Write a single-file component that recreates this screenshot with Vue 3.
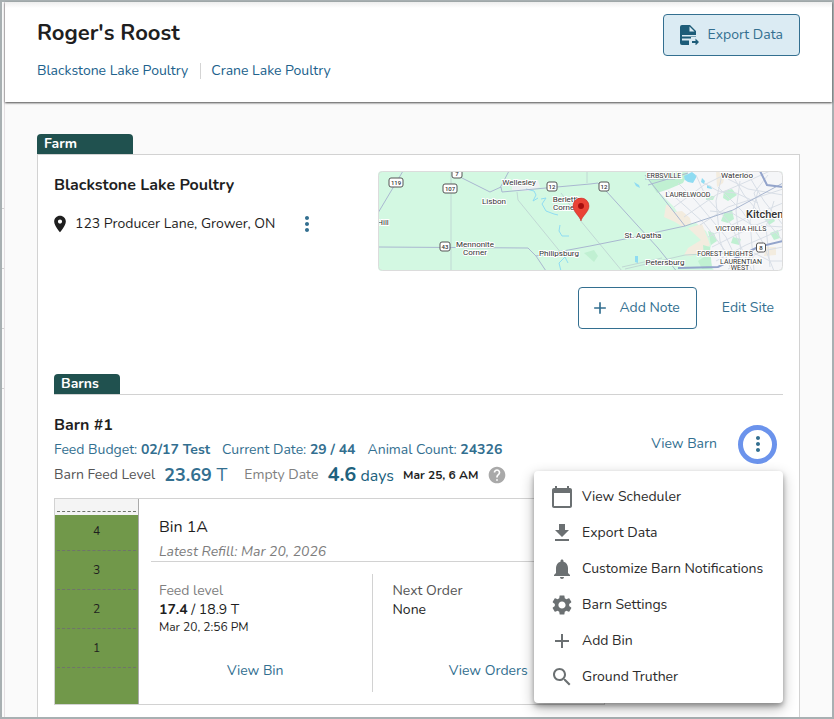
<script setup>
import { ref } from 'vue'

const icons = {
  calendar: 'M20 3h-1V1h-2v2H7V1H5v2H4c-1.1 0-2 .9-2 2v16c0 1.1.9 2 2 2h16c1.1 0 2-.9 2-2V5c0-1.1-.9-2-2-2zm0 18H4V8h16v13z',
  download: 'M19 9h-4V3H9v6H5l7 7 7-7zM5 18v2h14v-2H5z',
  bell: 'M12 22c1.1 0 2-.9 2-2h-4c0 1.1.89 2 2 2zm6-6v-5c0-3.07-1.64-5.64-4.5-6.32V4c0-.83-.67-1.5-1.5-1.5s-1.5.67-1.5 1.5v.68C7.63 5.36 6 7.92 6 11v5l-2 2v1h16v-1l-2-2z',
  settings: 'M19.14 12.94c.04-.3.06-.61.06-.94 0-.32-.02-.64-.07-.94l2.03-1.58c.18-.14.23-.41.12-.61l-1.92-3.32c-.12-.22-.37-.29-.59-.22l-2.39.96c-.5-.38-1.03-.7-1.62-.94l-.36-2.54c-.04-.24-.24-.41-.48-.41h-3.84c-.24 0-.43.17-.47.41l-.36 2.54c-.59.24-1.13.57-1.62.94l-2.39-.96c-.22-.08-.47 0-.59.22L2.74 8.87c-.12.21-.08.47.12.61l2.03 1.58c-.05.3-.09.63-.09.94s.02.64.07.94l-2.03 1.58c-.18.14-.23.41-.12.61l1.92 3.32c.12.22.37.29.59.22l2.39-.96c.5.38 1.03.7 1.62.94l.36 2.54c.05.24.24.41.48.41h3.84c.24 0 .44-.17.47-.41l.36-2.54c.59-.24 1.13-.56 1.62-.94l2.39.96c.22.08.47 0 .59-.22l1.92-3.32c.12-.22.07-.47-.12-.61l-2.01-1.58zM12 15.6c-1.98 0-3.6-1.62-3.6-3.6s1.62-3.6 3.6-3.6 3.6 1.62 3.6 3.6-1.62 3.6-3.6 3.6z',
  plus: 'M19 13h-6v6h-2v-6H5v-2h6V5h2v6h6v2z',
  search: 'M15.5 14h-.79l-.28-.27C15.41 12.59 16 11.11 16 9.5 16 5.91 13.09 3 9.5 3S3 5.91 3 9.5 5.91 16 9.5 16c1.61 0 3.09-.59 4.23-1.57l.27.28v.79l5 4.99L20.49 19l-4.99-5zm-6 0C7.01 14 5 11.99 5 9.5S7.01 5 9.5 5 14 7.01 14 9.5 11.99 14 9.5 14z',
  more: 'M12 8c1.1 0 2-.9 2-2s-.9-2-2-2-2 .9-2 2 .9 2 2 2zm0 2c-1.1 0-2 .9-2 2s.9 2 2 2 2-.9 2-2-.9-2-2-2zm0 6c-1.1 0-2 .9-2 2s.9 2 2 2 2-.9 2-2-.9-2-2-2z',
  place: 'M12 2C8.13 2 5 5.13 5 9c0 5.25 7 13 7 13s7-7.75 7-13c0-3.87-3.13-7-7-7zm0 9.5c-1.38 0-2.5-1.12-2.5-2.5s1.12-2.5 2.5-2.5 2.5 1.12 2.5 2.5-1.12 2.5-2.5 2.5z',
  help: 'M12 2C6.48 2 2 6.48 2 12s4.48 10 10 10 10-4.48 10-10S17.52 2 12 2zm1 17h-2v-2h2v2zm2.07-7.75l-.9.92C13.45 12.9 13 13.5 13 15h-2v-.5c0-1.1.45-2.1 1.17-2.83l1.24-1.26c.37-.36.59-.86.59-1.41 0-1.1-.9-2-2-2s-2 .9-2 2H8c0-2.21 1.79-4 4-4s4 1.79 4 4c0 .88-.36 1.68-.93 2.25z'
}

const menuOpen = ref(true)
const menuItems = [
  { label: 'View Scheduler', icon: icons.calendar },
  { label: 'Export Data', icon: icons.download },
  { label: 'Customize Barn Notifications', icon: icons.bell },
  { label: 'Barn Settings', icon: icons.settings },
  { label: 'Add Bin', icon: icons.plus },
  { label: 'Ground Truther', icon: icons.search }
]

const bin = { level: 17.4, capacity: 18.9, rings: [4, 3, 2, 1] }
const fillPercent = Math.round((bin.level / bin.capacity) * 1000) / 10 + '%'

const shields = [
  { x: 18, y: 12, w: 14, n: '119' },
  { x: 79, y: 3, w: 10, n: '7' },
  { x: 72, y: 18, w: 14, n: '107' },
  { x: 67, y: 76, w: 10, n: '43' },
  { x: 174, y: 16, w: 10, n: '12' },
  { x: 226, y: 16, w: 10, n: '12' },
  { x: 383, y: 77, w: 9, n: '8' }
]
const places = [
  { x: 141, y: 14, t: 'Wellesley' },
  { x: 116, y: 33, t: 'Lisbon' },
  { x: 189, y: 31, t: 'Berlett\'s' },
  { x: 189, y: 39, t: 'Corners' },
  { x: 5, y: 54, t: 'Hill' },
  { x: 97, y: 76, t: 'Mennonite' },
  { x: 97, y: 84, t: 'Corner' },
  { x: 181, y: 85, t: 'Philipsburg' },
  { x: 265, y: 67, t: 'St. Agatha' },
  { x: 287, y: 94, t: 'Petersburg' },
  { x: 359, y: 7, t: 'Waterloo' }
]
const districts = [
  { x: 286, y: 7, t: 'ERBSVILLE' },
  { x: 310, y: 26, t: 'LAURELWOOD' },
  { x: 363, y: 60, t: 'VICTORIA HILLS' },
  { x: 347, y: 85, t: 'FOREST HEIGHTS' },
  { x: 363, y: 93, t: 'LAURENTIAN' },
  { x: 362, y: 99, t: 'WEST' }
]
</script>

<template>
  <div class="frame">
    <div class="rail"><span></span><span></span><span></span><span></span></div>
    <div class="page">
      <header class="top">
        <div>
          <h1>Roger's Roost</h1>
          <nav class="sites">
            <a href="#blackstone">Blackstone Lake Poultry</a>
            <a href="#crane">Crane Lake Poultry</a>
          </nav>
        </div>
        <button class="btn export" type="button">
          <svg width="20" height="20" viewBox="0 0 20 20" aria-hidden="true">
            <path d="M2 0h8l6 6v4H2v1.500h14v.5h-5v1.500H2v2h7V20H2a2 2 0 0 1-2-2V2a2 2 0 0 1 2-2z M12 16h3.500v-2.500L19 17l-3.500 3.500V18H12z" fill="#1d5c78" />
            <path d="M9.500 1.500V6.500h5z" fill="#dbebf3" />
          </svg>
          Export Data
        </button>
      </header>

      <main class="body">
        <h2 class="tab farm-tab">Farm</h2>
        <section class="card">
          <div class="farm">
            <div>
              <h3 class="name">Blackstone Lake Poultry</h3>
              <div class="address">
                <svg class="pin" viewBox="0 0 24 24" aria-hidden="true"><path :d="icons.place" /></svg>
                <span>123 Producer Lane, Grower, ON</span>
                <button class="kebab" type="button" aria-label="Site options">
                  <svg class="icon" viewBox="0 0 24 24" aria-hidden="true"><path :d="icons.more" /></svg>
                </button>
              </div>
            </div>
            <svg class="map" viewBox="0 0 405 100" preserveAspectRatio="xMidYMid slice" role="img" aria-label="Farm location">
              <rect width="405" height="100" fill="#d3f8e2" />
              <path d="M310 0H405V100H336L330 84 334 72 328 60 318 52 306 52 296 36 280 20 290 16 300 14z" fill="#f5f6f8" />
              <path d="M134 13l6-5 10 2 10-1 2 7-12 4-16-1z" fill="#edf0f2" />
              <path d="M288 34l3 0 5 7 8-1 8 7 1 5-8 4-8-5-11-5z M310 57l14-4 6 15 2 6-10 8-9 3-7-1 4-7 13-8z M338 0h10l-3 12-6 4z M388 76h10v8l-12 1z" fill="#f3ecdf" />
              <path d="M343 50l3-8 8-3 2 9-6 4z M346 20l8-2 5 6-9 6-5-3z M328 22l4 0 0 3 5 0-2 4-7 0z M385 45l8-3 4 8-6 4z M392 62l8-3 2 8-6 2z M330 60l6 2 3 8-6 4z M325 74l7 2 2 22h-10l-4-8 6-4z M206 82l10-3 4 6-4 6z M270 8l20-6 20 0-5 10-14 6-12 4z M355 66l8 2-2 6-8-2z" fill="#c0f0d2" />
              <path d="M306 5l8-4 5 4-4 7-5-1-3-2z M329 14l4 1 1 3-5-1z M256 11l5 3 1 3-4-2z M257 85l3 0 0 7-3-1z M324 7l3 3-1 3-3-2z" fill="#8fdcf2" />
              <g fill="none" stroke="#8fdcf2" stroke-width="1">
                <path d="M148 18l8 2 2 4-3 6 5-3M163 28l5-1-4 6 4 7 8 3 4 1M182 54l-1 6 3 5 7 0M183 100l-2-8 6-6 3 6" />
              </g>
              <g fill="none" stroke="#d8dee6" stroke-width="1">
                <path d="M290 20l16 14 20 18 26 34M300 12l18 18 30 36 16 34M318 4l10 22 24 26 22 48M340 16l24 24 20 30 12 30M352 0l14 24 24 28 15 18M368 0l18 30 19 24M296 36l30-22 20-10M306 46l32-22 32-14 22-10M322 54l28-18 55-18M330 66l36-18 39-16M334 76l44-22 27-10M338 90l30-16 37-16M350 98l34-18 21-4M344 4l-6 26 4 40 10 26M362 10l-4 30 6 50M380 20l-8 30 4 50M396 30l-8 26 4 40M332 40l22 2 20 12 31 2M350 8l20 10 35 6M326 12l14 8 18 2 22 10M356 88l20-6 16 8 13 0M390 4l-14 18 6 18 14 8" />
              </g>
              <g fill="none" stroke="#c0d8d4" stroke-width="1">
                <path d="M73 0V100M139 21l1 8 44 54M202 49l42 51M209 0v12M247 98l60-14 40-2M244 96l40-9M183 22l20 27" />
              </g>
              <g fill="none" stroke="#a9b7d0" stroke-width="1">
                <path d="M25 0L0 42M78 4l34 17 11-5 1 5 88-8 8-1 9 9 51 56 20 25M131 0l-9 17M0 76l150 1 8 8 10 15M158 85l54-10 35-7 60-13 48-16 50-27M267 4l40 51M267 8l30 0M270 14l40-12" />
              </g>
              <g fill="none" stroke="#93a4cb" stroke-width="2">
                <path d="M300 97l40-1 24-12 16-8 25-6M382 0l7 14 16 2" />
              </g>
              <g class="shields">
                <g v-for="(s, i) in shields" :key="i">
                  <rect :x="s.x - s.w / 2" :y="s.y - 5" :width="s.w" height="9" rx="2" fill="#fff" stroke="#555" />
                  <text :x="s.x" :y="s.y + 2">{{ s.n }}</text>
                </g>
              </g>
              <g class="places">
                <text v-for="p in places" :key="p.t" :x="p.x" :y="p.y">{{ p.t }}</text>
              </g>
              <g class="districts">
                <text v-for="d in districts" :key="d.t" :x="d.x" :y="d.y">{{ d.t }}</text>
              </g>
              <text class="city" x="368" y="47">Kitchener</text>
              <path d="M203 50c-1-5-8-9-8-15a8 8 0 0 1 16 0c0 6-7 10-8 15z" fill="#ea4335" stroke="#c5221f" stroke-width="0.500" />
              <circle cx="203" cy="35" r="3" fill="#a50e0e" />
              <rect x="0.500" y="0.500" width="404" height="99" rx="4" fill="none" stroke="#dcdcdc" />
            </svg>
          </div>

          <div class="actions">
            <button class="btn outline" type="button">
              <svg class="plus" viewBox="0 0 24 24" aria-hidden="true"><path :d="icons.plus" /></svg>
              Add Note
            </button>
            <a class="link edit" href="#edit">Edit Site</a>
          </div>

          <h2 class="tab barns-tab">Barns</h2>
          <div class="barn">
            <div class="barn-head">
              <div>
                <h3 class="barn-name">Barn #1</h3>
                <div class="budget">
                  <span>Feed Budget: <b>02/17 Test</b></span>
                  <span>Current Date: <b>29 / 44</b></span>
                  <span>Animal Count: <b>24326</b></span>
                </div>
              </div>
              <div class="barn-actions">
                <a class="link" href="#barn">View Barn</a>
                <button
                  class="kebab ring"
                  type="button"
                  aria-label="Barn options"
                  :aria-expanded="menuOpen"
                  @click="menuOpen = !menuOpen"
                >
                  <svg class="icon" viewBox="0 0 24 24" aria-hidden="true"><path :d="icons.more" /></svg>
                </button>
              </div>
            </div>
            <div class="levels">
              <span class="dark">Barn Feed Level</span>
              <span class="amount"><b>23.69</b> T</span>
              <span class="muted empty">Empty Date</span>
              <span class="days"><b>4.6</b> days</span>
              <b class="stamp">Mar 25, 6 AM</b>
              <svg class="help" viewBox="0 0 24 24" role="img" aria-label="Help"><path :d="icons.help" /></svg>
            </div>

            <article class="bin">
              <div class="gauge">
                <div class="fill" :style="{ height: fillPercent }"></div>
                <div class="rings">
                  <span v-for="n in bin.rings" :key="n">{{ n }}</span>
                  <span></span>
                </div>
              </div>
              <div class="bin-main">
                <div class="bin-head">
                  <h4>Bin 1A</h4>
                  <em>Latest Refill: Mar 20, 2026</em>
                </div>
                <div class="cols">
                  <div class="col">
                    <span class="muted">Feed level</span>
                    <span class="value"><b>{{ bin.level }}</b> / {{ bin.capacity }} T</span>
                    <span class="small">Mar 20, 2:56 PM</span>
                    <a class="link" href="#bin">View Bin</a>
                  </div>
                  <div class="col">
                    <span class="dark">Next Order</span>
                    <span class="value">None</span>
                    <a class="link" href="#orders">View Orders</a>
                  </div>
                </div>
              </div>
            </article>

            <div v-if="menuOpen" class="menu" role="menu">
              <button v-for="m in menuItems" :key="m.label" type="button" role="menuitem">
                <svg class="icon" viewBox="0 0 24 24" aria-hidden="true"><path :d="m.icon" /></svg>
                {{ m.label }}
              </button>
            </div>
          </div>
        </section>
      </main>
    </div>
  </div>
</template>

<style>
body {
  margin: 0;
}
</style>

<style scoped>
* {
  box-sizing: border-box;
}
.frame {
  display: flex;
  min-height: 100vh;
  border: 2px solid #a8b0b2;
  background: #fafafa;
  color: #1f1f1f;
  font: 14px/20px Nunito, Lato, 'Open Sans', sans-serif;
}
h1, h2, h3, h4 {
  margin: 0;
}
a {
  color: #20618c;
  text-decoration: none;
}
button {
  margin: 0;
  padding: 0;
  border: 0;
  background: none;
  font: inherit;
  color: #336f90;
  cursor: pointer;
}
svg {
  display: block;
  flex: none;
  fill: currentColor;
}
.icon {
  width: 24px;
  height: 24px;
}
.rail {
  display: flex;
  flex-direction: column;
  gap: 59px;
  width: 3px;
  padding-top: 206px;
  border-right: 1px solid #e4dfe2;
}
.rail span {
  height: 1px;
  background: #d0d0d0;
}
.page {
  display: flex;
  flex: 1;
  flex-direction: column;
  min-width: 0;
}
.top {
  display: flex;
  justify-content: space-between;
  align-items: flex-start;
  min-height: 100px;
  padding: 12px 32px 0;
  background: linear-gradient(#eeeeee, #ffffff 6px);
  box-shadow: 0 1px 2px rgba(0, 0, 0, 0.7);
}
h1 {
  padding-top: 5px;
  font-size: 22px;
  line-height: 28px;
  font-weight: 700;
}
.sites {
  display: flex;
  margin-top: 16px;
  line-height: 16px;
}
.sites a + a {
  margin-left: 12px;
  padding-left: 10px;
  border-left: 1px solid #d4d4d4;
}
.btn {
  display: flex;
  align-items: center;
  height: 42px;
  border: 1px solid #336f90;
  border-radius: 4px;
}
.export {
  gap: 8px;
  padding: 0 16px;
  background: #dbebf3;
}
.body {
  display: flex;
  flex: 1;
  flex-direction: column;
  padding: 32px 32px 0;
}
.tab {
  height: 20px;
  padding-left: 7px;
  border-radius: 4px 4px 0 0;
  background: #20514f;
  color: #ffffff;
  font-size: 14px;
  line-height: 20px;
}
.farm-tab {
  width: 96px;
}
.barns-tab {
  width: 66px;
  margin-top: 45px;
}
.card {
  flex: 1;
  padding: 16px 16px 12px;
  border: 1px solid #d2d2d2;
  border-bottom: 0;
  background: #ffffff;
}
.farm {
  display: grid;
  grid-template-columns: 4fr 5fr;
}
.name {
  padding-top: 4px;
  font-size: 16px;
}
.address {
  display: flex;
  align-items: center;
  margin-top: 17px;
}
.pin {
  width: 20px;
  height: 20px;
  margin: 0 5px 0 -4px;
}
.kebab {
  color: #336f90;
}
.address .kebab {
  margin-left: 20px;
}
.map {
  width: 100%;
  height: 100px;
  border-radius: 4px;
}
.map text {
  fill: #333333;
  stroke: #ffffff;
  stroke-width: 2px;
  paint-order: stroke;
  text-anchor: middle;
  font-family: Roboto, sans-serif;
  font-size: 8px;
}
.map .shields text {
  stroke-width: 0;
  font-size: 6px;
  font-weight: 500;
}
.map .districts text {
  font-size: 7px;
}
.map .city {
  font-size: 11px;
  font-weight: 500;
  text-anchor: start;
}
.actions {
  display: flex;
  align-items: center;
  justify-content: flex-end;
  gap: 25px;
  margin-top: 16px;
}
.outline {
  gap: 9px;
  padding: 0 16px 0 11px;
}
.plus {
  width: 20px;
  height: 20px;
}
.link {
  color: #336f90;
}
.edit {
  margin-right: 9px;
}
.barn {
  position: relative;
  border-top: 1px solid #d2d2d2;
}
.barn-head {
  display: flex;
  justify-content: space-between;
  padding-top: 20px;
}
.barn-name {
  font-size: 16px;
}
.budget {
  display: flex;
  gap: 12px;
  margin-top: 5px;
  color: #336f90;
}
.barn-actions {
  display: flex;
  align-items: center;
  gap: 21px;
  height: 40px;
  margin: 9px 6px 0 0;
}
.ring {
  display: grid;
  place-items: center;
  width: 39px;
  height: 39px;
  border: 5px solid #6b93ec;
  border-radius: 50%;
}
.levels {
  display: flex;
  align-items: center;
  height: 22px;
  margin-bottom: 12px;
  gap: 9px;
}
.dark {
  color: #555555;
}
.muted {
  color: #808080;
}
.amount {
  color: #336f90;
  font-size: 18px;
}
.empty {
  margin-left: 8px;
}
.days {
  color: #20617d;
  font-size: 16px;
}
.days b {
  font-size: 20px;
}
.stamp {
  font-size: 12px;
}
.help {
  width: 20px;
  height: 20px;
  color: #a9a9a9;
}
.bin {
  display: flex;
  max-width: 551px;
  height: 207px;
  border: 1px solid #d2d2d2;
}
.gauge {
  position: relative;
  width: 84px;
  flex: none;
  border-right: 1px solid #aaaaaa;
  background: #f4f4f4;
}
.fill {
  position: absolute;
  right: 0;
  bottom: 0;
  left: 0;
  background: #71984a;
}
.rings {
  position: relative;
  display: flex;
  flex-direction: column;
  padding: 12px 2px 0;
  font-size: 12px;
  line-height: 38px;
  text-align: center;
}
.rings span {
  height: 39px;
  border-top: 1px dashed #6f746c;
}
.bin-main {
  display: flex;
  flex: 1;
  flex-direction: column;
}
.bin-head {
  margin: 0 12px;
  padding: 18px 8px 0;
  height: 63px;
  border-bottom: 1px solid #d2d2d2;
}
h4 {
  font-size: 16px;
  font-weight: 400;
}
em {
  display: block;
  margin-top: 5px;
  color: #7d7d7d;
}
.cols {
  display: grid;
  flex: 1;
  grid-template-columns: 1fr 1fr;
  padding: 12px 0;
}
.col {
  display: flex;
  flex-direction: column;
  padding: 7px 20px 11px;
}
.col + .col {
  border-left: 1px solid #d2d2d2;
}
.value {
  line-height: 18px;
}
.small {
  font-size: 12px;
  line-height: 16px;
}
.col .link {
  margin-top: auto;
  text-align: center;
}
.menu {
  position: absolute;
  top: 76px;
  right: 0;
  display: flex;
  flex-direction: column;
  min-width: 249px;
  padding: 8px 0;
  border-radius: 4px;
  background: #ffffff;
  box-shadow: 0 3px 5px rgba(0, 0, 0, 0.3), 0 5px 14px rgba(0, 0, 0, 0.3);
}
.menu button {
  display: flex;
  align-items: center;
  gap: 8px;
  height: 36px;
  padding: 0 16px;
  color: #2b2b2b;
}
.menu svg {
  color: #6b7072;
}
</style>
